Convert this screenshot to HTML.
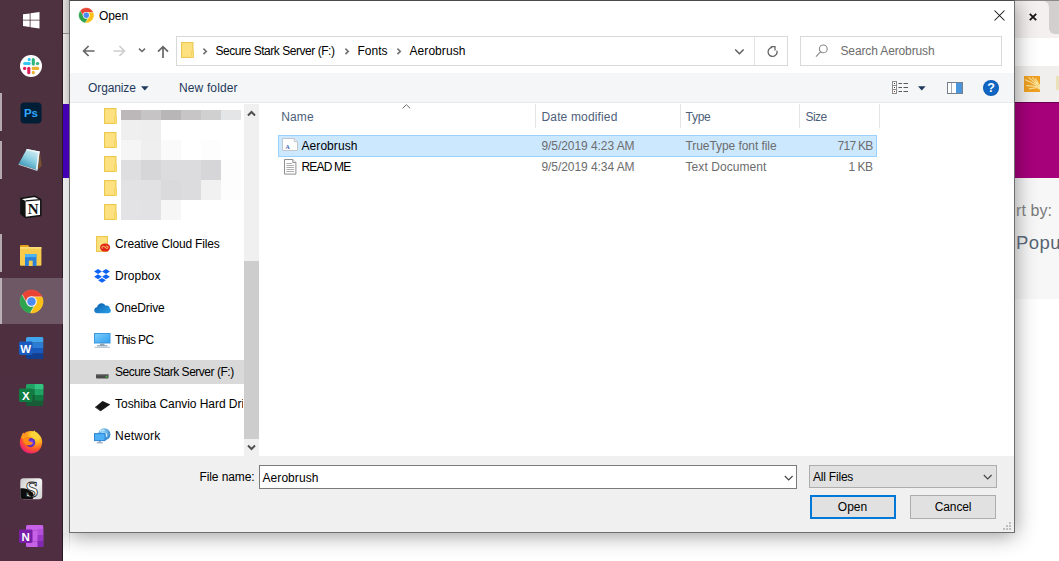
<!DOCTYPE html>
<html lang="en"><head><meta charset="utf-8"><title>Open</title>
<style>
*{box-sizing:border-box;margin:0;padding:0}
html,body{width:1059px;height:561px;overflow:hidden;background:#fff}
body{position:relative;font-family:"Liberation Sans",sans-serif;font-size:12px;color:#000}
.a{position:absolute}
.t{position:absolute;white-space:pre;line-height:16px;height:16px;font-family:"Liberation Sans",sans-serif}
svg{position:absolute;overflow:visible}
/* background page */
#bg{left:0;top:0;width:1059px;height:561px;background:#fff}
/* taskbar */
#tb{left:0;top:0;width:63px;border-right:1px solid #2b1a25;height:561px;background:linear-gradient(180deg,#4e323f 0%,#4e3040 50%,#4f2e42 100%)}
.run{left:0;width:2.3px;height:38px;background:#b3a9af}
/* dialog */
#dlg{left:69px;top:0;width:946px;height:532.5px;background:#fff;border:1px solid #6e6e6e;border-top-color:#4a4a4a;box-shadow:0 2px 20px 0 rgba(0,0,0,.42);clip-path:inset(0 -45px -45px 0)}
#toolbar{left:70px;top:73px;width:944px;height:30px;background:#f5f6f7;border-bottom:1px solid #e8e9ea}
#addr{left:176px;top:36px;width:612px;height:30px;border:1px solid #d9d9d9;background:#fff}
#search{left:800px;top:36px;width:202px;height:30px;border:1px solid #d9d9d9;background:#fff}
#navscroll{left:243.8px;top:104px;width:15.6px;height:352px;background:#f0f0f0}
#navthumb{left:243.8px;top:260.7px;width:15.6px;height:178px;background:#cdcdcd}
#navsel{left:70px;top:360px;width:173.8px;height:23.6px;background:#d9d9d9}
#bottom{left:70px;top:456px;width:944px;height:76px;background:#f0f0f0}
#fname{left:259px;top:465px;width:538px;height:24px;border:1px solid #7a7a7a;background:#fff}
#filter{left:809px;top:465px;width:188px;height:23px;border:1px solid #adadad;background:#e1e1e1}
#bopen{left:810px;top:495px;width:86px;height:24px;border:2px solid #0078d7;background:#e1e1e1}
#bcancel{left:910px;top:495px;width:86px;height:24px;border:1px solid #adadad;background:#e1e1e1}
#rowsel{left:278px;top:135px;width:599px;height:22px;background:#cce8ff;border:1px solid #99d1ff}
.hdiv{top:104px;width:1px;height:24px;background:#e5e5e5}

</style></head>
<body>
<div id="bg" class="a">
  <!-- left strip behind dialog -->
  <div class="a" style="left:62px;top:0;width:8px;height:561px;background:linear-gradient(90deg,#ececec,#dedede)"></div>
  <div class="a" style="left:62px;top:0;width:8px;height:34px;background:linear-gradient(90deg,#e6e4e2,#bab8b6)"></div>
  <div class="a" style="left:62px;top:33px;width:8px;height:1px;background:#8d8b89"></div>
  <div class="a" style="left:62px;top:34px;width:8px;height:70px;background:linear-gradient(90deg,#efedeb,#c4c2c0)"></div>
  <div class="a" style="left:62px;top:103.5px;width:8px;height:74px;background:#4300b3"></div>
  <div class="a" style="left:62px;top:533px;width:8px;height:28px;background:linear-gradient(180deg,#e2e2e2,#fff 75%)"></div>
  <!-- right side: chrome window -->
  <div class="a" style="left:1010px;top:0;width:49px;height:38px;background:#d2d0cf"></div>
  <div class="a" style="left:1010px;top:1px;width:38.5px;height:37px;background:#f3f0ef;border-radius:0 6px 0 0"></div>
  <div class="a" style="left:1042px;top:27px;width:17px;height:11px;background:#f3f0ef"></div>
  <div class="a" style="left:1048.5px;top:0;width:20px;height:33.5px;background:#d2d0cf;border-radius:0 0 0 6px"></div>
  <div class="a" style="left:1010px;top:0;width:49px;height:1px;background:#8a8785"></div>
  <svg style="left:1029.1px;top:12.9px" width="8" height="8" viewBox="0 0 8 8"><path d="M.8.8 7.2 7.2M7.2.8.8 7.2" stroke="#161616" stroke-width="1.8"/></svg>
  <div class="a" style="left:1010px;top:37.5px;width:49px;height:28.5px;background:#fff"></div>
  <div class="a" style="left:1010px;top:65.7px;width:49px;height:37px;background:#f1efee"></div>
  <svg style="left:1024px;top:75.8px" width="16" height="16" viewBox="0 0 16 16"><rect width="16" height="16" fill="#f0a122"/><g stroke="#fbe39a" stroke-width="1.1" stroke-linecap="round"><path d="M13 9.3 1.3 3.7M13.200000000000001 8.5 4.8 1.6M13.8 8 8.5 1.6M14.4 7.5 11.7 2.7M12.8 10.4 2.7 9.6M13 11.600000000000001 5.3 12.8"/></g><circle cx="16" cy="10.7" r="2.8" fill="#fbe39a"/><rect x="16" y="0" width="4" height="16" fill="#f1efee"/></svg>
  <div class="a" style="left:1056px;top:76.4px;width:8px;height:14px;background:#e9e1ba"></div>
  <div class="a" style="left:1010px;top:102.5px;width:49px;height:75px;background:#a7007b"></div>
  <div class="a" style="left:1010px;top:102.3px;width:49px;height:1.2px;background:#6a0050"></div>
  <div class="a" style="left:1010px;top:177.5px;width:49px;height:121px;background:#f7f7f7"></div>
  <div class="a" style="left:1010px;top:298.5px;width:49px;height:263px;background:#fff"></div>
  <!-- shadow to the right of dialog -->
  <div class="a" style="left:1014px;top:0;width:18px;height:0px;background:none"></div>
</div>
<div id="tb" class="a"></div>
<div class="a" style="left:0;top:277.6px;width:62.5px;height:46px;background:#6f5866"></div>
<div class="a run" style="top:93px"></div>
<div class="a run" style="top:140.6px"></div>
<div class="a run" style="top:234.3px"></div>
<div class="a run" style="top:277.6px;height:46px;background:#b9afb5"></div>
<svg style="left:23px;top:12px" width="16.5" height="16.5" viewBox="0 0 16.5 16.5"><path d="M0 2.3 6.7 1.4V7.8H0zM7.5 1.3 16.5 0V7.8H7.5zM0 8.6H6.7V15L0 14.1zM7.5 8.6H16.5V16.5L7.5 15.2z" fill="#fff"/></svg>
<svg style="left:19.8px;top:54.5px" width="22" height="22" viewBox="0 0 22 22"><circle cx="11" cy="11" r="11" fill="#fff"/><g stroke-linecap="round" stroke-width="3.1" fill="none"><path d="M4.7 8.5H9.2" stroke="#36c5f0"/><path d="M9.2 4.4v.4" stroke="#36c5f0"/><path d="M13.3 4.6V9" stroke="#2eb67d"/><path d="M17.4 8.5h.3" stroke="#2eb67d"/><path d="M13.2 13.4H17.7" stroke="#ecb22e"/><path d="M13.3 17.4v.4" stroke="#ecb22e"/><path d="M8.8 13.2V17.7" stroke="#e01e5a"/><path d="M4.5 13.4h.3" stroke="#e01e5a"/></g></svg>
<svg style="left:20px;top:102px" width="22" height="22" viewBox="0 0 22 22"><rect x="0.5" y="0.5" width="21" height="21" rx="4" fill="#001e36"/><text x="11" y="15.3" font-family="Liberation Sans, sans-serif" font-weight="700" font-size="11.5" fill="#31a8ff" text-anchor="middle">Ps</text></svg>
<svg style="left:18px;top:148px" width="25" height="23" viewBox="0 0 25 23"><defs><linearGradient id="np" x1=".75" y1="0" x2=".2" y2="1"><stop offset="0" stop-color="#d9f0f6"/><stop offset=".45" stop-color="#8fd0e2"/><stop offset="1" stop-color="#2389ad"/></linearGradient></defs><path d="M21.6 3.4 23.8 17.5 19.5 22z" fill="#7a5230"/><path d="M8.8.9 21.6 3.4 19.5 22 .6 15.9z" fill="url(#np)"/><path d="M21.6 3.4 19.5 22 17.9 21.5 20.2 3.1z" fill="#eef4f6"/><path d="M8.8.9 21.6 3.4 21.4 4.9 8.2 2.2z" fill="#eef6f8"/><path d="M.6 15.9 19.5 22 19.3 22.9 .5 16.8z" fill="#cfd8dc"/></svg>
<svg style="left:20px;top:195px" width="22" height="24" viewBox="0 0 22 24"><path d="M.9 3.4 15 1.3 20.8 4.7V20.5L5.6 22.5.9 18.6z" fill="#fff" stroke="#111" stroke-width="1.5" stroke-linejoin="round"/><path d="M.9 3.4 5.6 5.9V22.5L.9 18.6z" fill="#111"/><path d="M5.6 5.9 20.8 4.7" stroke="#111" stroke-width="1.3"/><text x="13.2" y="19" font-family="Liberation Serif, serif" font-weight="700" font-size="15" fill="#111" text-anchor="middle">N</text></svg>
<svg style="left:20px;top:244.4px" width="23" height="22" viewBox="0 0 23 22"><path d="M0 2.2C0 1.5.5 1 1.2 1H8l2 2.5H0z" fill="#e3a21a"/><rect x="0" y="3" width="21.4" height="18.8" rx="1" fill="#f8cb4c"/><rect x="0" y="3" width="21.4" height="1.8" fill="#fbdc7a"/><path d="M5 10H16.5V22H5z" fill="#2a7fd6"/><path d="M5 10H16.5V13.2H5z" fill="#4fb3f2"/><rect x="8.8" y="16.6" width="3.9" height="5.4" fill="#f8cb4c"/></svg>
<svg style="left:19.5px;top:289.5px" width="23" height="23" viewBox="0 0 24 24"><circle cx="12" cy="12" r="11.7" fill="#fff"/><g stroke-width=".7" stroke-linejoin="round"><path d="M12 0C8.21 0 4.831 1.757 2.632 4.501l3.953 6.848A5.454 5.454 0 0 1 12 6.545h10.691A12 12 0 0 0 12 0z" fill="#e94435" stroke="#e94435"/><path d="M1.931 5.47A11.943 11.943 0 0 0 0 12c0 6.012 4.42 10.991 10.189 11.864l3.953-6.847a5.45 5.45 0 0 1-6.865-2.29z" fill="#2ea44f" stroke="#2ea44f"/><path d="M15.273 7.636a5.446 5.446 0 0 1 1.45 7.09l.002.001h-.002l-5.344 9.257c.206.01.413.016.621.016 6.627 0 12-5.373 12-12 0-1.54-.29-3.011-.818-4.364z" fill="#fbc116" stroke="#fbc116"/></g><circle cx="12" cy="12" r="5.5" fill="#f1f1f1"/><circle cx="12" cy="12" r="4.4" fill="#4a8af4"/></svg>
<svg style="left:18.5px;top:337px" width="25" height="22" viewBox="0 0 25 22"><g><clipPath id="ocW"><rect x="7" y="0" width="17.5" height="22" rx="1.6"/></clipPath><g clip-path="url(#ocW)"><rect x="7" y="0.0" width="17.5" height="5.6" fill="#41a5ee"/><rect x="7" y="5.5" width="17.5" height="5.6" fill="#2b7cd3"/><rect x="7" y="11.0" width="17.5" height="5.6" fill="#185abd"/><rect x="7" y="16.5" width="17.5" height="5.6" fill="#103f91"/></g></g><rect x="0" y="4.5" width="13.5" height="13.5" rx="1.4" fill="#185abd"/><text x="6.75" y="15.6" font-family="Liberation Sans, sans-serif" font-weight="700" font-size="11.5" fill="#fff" text-anchor="middle">W</text></svg>
<svg style="left:18.5px;top:384px" width="25" height="22" viewBox="0 0 25 22"><g><clipPath id="ocX"><rect x="7" y="0" width="17.5" height="22" rx="1.6"/></clipPath><g clip-path="url(#ocX)"><rect x="7" y="0.0" width="17.5" height="5.6" fill="#21a366"/><rect x="7" y="5.5" width="17.5" height="5.6" fill="#107c41"/><rect x="7" y="11.0" width="17.5" height="5.6" fill="#185c37"/><rect x="7" y="16.5" width="17.5" height="5.6" fill="#185c37"/><rect x="15.75" y="0" width="9" height="5.6" fill="#33c481"/><rect x="15.75" y="5.5" width="9" height="5.6" fill="#21a366"/><rect x="15.75" y="11" width="9" height="5.6" fill="#107c41"/></g></g><rect x="0" y="4.5" width="13.5" height="13.5" rx="1.4" fill="#107c41"/><text x="6.75" y="15.6" font-family="Liberation Sans, sans-serif" font-weight="700" font-size="11.5" fill="#fff" text-anchor="middle">X</text></svg>
<svg style="left:19px;top:429.5px" width="24" height="24" viewBox="0 0 24 24"><defs><radialGradient id="ff1" cx=".72" cy=".18" r="1"><stop offset="0" stop-color="#fff04a"/><stop offset=".35" stop-color="#ffb01f"/><stop offset=".62" stop-color="#ff5a26"/><stop offset=".85" stop-color="#f0256b"/><stop offset="1" stop-color="#c21a8a"/></radialGradient><radialGradient id="ff2" cx=".55" cy=".5" r=".55"><stop offset="0" stop-color="#8a55ff"/><stop offset="1" stop-color="#4b1ea8"/></radialGradient></defs><circle cx="12" cy="12.3" r="11.2" fill="url(#ff1)"/><path d="M10.5 4C12.8 3 14.6 1.6 15.300000000000001.2 16 2.2 19.8 4 20.6 8.5L12 6z" fill="#ffd43a"/><path d="M2.2 8C2.2 5.5 3.4 3.4 4.6 2.4 5 4 6.5 5 8.5 5.3L5 10z" fill="#ff9a1f"/><circle cx="11.7" cy="12.6" r="4.6" fill="url(#ff2)"/><path d="M4 9.5C6.2 6.6 10.5 6.2 13 7.8 10.8 7.9 9.6 8.9 9.6 10.2c.2 2 3.6 1.3 4.2 2.8-1.2 2.3-4.6 2.9-7 1.5C4.8 13.4 4 11.300000000000001 4 9.5z" fill="#ff8a16"/></svg>
<svg style="left:20.3px;top:478.3px" width="22.5" height="21.5" viewBox="0 0 22.5 21.5"><defs><linearGradient id="sc" x1="0" y1="0" x2="1" y2="1"><stop offset="0" stop-color="#c9c9c9"/><stop offset=".5" stop-color="#f4f4f4"/><stop offset="1" stop-color="#d0d0d0"/></linearGradient><clipPath id="scc"><rect x=".3" y=".3" width="21.9" height="20.9" rx="3.2"/></clipPath></defs><rect x=".3" y=".3" width="21.9" height="20.9" rx="3.2" fill="url(#sc)"/><g clip-path="url(#scc)"><path d="M0 10.5C4 9.5 8.5 11 12.5 14.5 14 16 14 19 12.5 21.5H0z" fill="#0d0d0d"/></g><text x="11.8" y="19.3" font-family="Liberation Serif, serif" font-weight="700" font-size="23" fill="#fff" stroke="#1c1c1c" stroke-width=".8" text-anchor="middle">S</text><ellipse cx="11.3" cy="16.6" rx="1.6" ry="2.4" fill="#0d0d0d"/></svg>
<svg style="left:18.5px;top:525.3px" width="25" height="22" viewBox="0 0 25 22"><g><clipPath id="ocN"><rect x="7" y="0" width="17.5" height="22" rx="1.6"/></clipPath><g clip-path="url(#ocN)"><rect x="7" y="0.0" width="17.5" height="5.6" fill="#c762e8"/><rect x="7" y="5.5" width="17.5" height="5.6" fill="#c762e8"/><rect x="7" y="11.0" width="17.5" height="5.6" fill="#c762e8"/><rect x="7" y="16.5" width="17.5" height="5.6" fill="#c762e8"/><rect x="18.5" y="4" width="6" height="6" fill="#b250da"/><rect x="18.5" y="10" width="6" height="6" fill="#9a38c6"/><rect x="18.5" y="16" width="6" height="6" fill="#8227b2"/></g></g><rect x="0" y="4.5" width="13.5" height="13.5" rx="1.4" fill="#7a1fa8"/><text x="6.75" y="15.6" font-family="Liberation Sans, sans-serif" font-weight="700" font-size="11.5" fill="#fff" text-anchor="middle">N</text></svg>
<div id="dlg" class="a"></div>
<div id="toolbar" class="a"></div>
<div id="addr" class="a"></div>
<div class="a" style="left:754px;top:37px;width:1px;height:28px;background:#e3e3e3"></div>
<div id="search" class="a"></div>
<div id="navscroll" class="a"></div>
<div id="navthumb" class="a"></div>
<div id="navsel" class="a"></div>
<div id="rowsel" class="a"></div>
<div class="a hdiv" style="left:535px"></div>
<div class="a hdiv" style="left:680px"></div>
<div class="a hdiv" style="left:799px"></div>
<div class="a hdiv" style="left:879px"></div>
<div id="bottom" class="a"></div>
<div id="fname" class="a"></div>
<div id="filter" class="a"></div>
<div id="bopen" class="a"></div>
<div id="bcancel" class="a"></div>
<div class="a" style="left:121px;top:110px;width:20px;height:10px;background:#bcb8ba"></div>
<div class="a" style="left:141px;top:110px;width:20px;height:10px;background:#c6c4c5"></div>
<div class="a" style="left:161px;top:110px;width:20px;height:10px;background:#b9b6b8"></div>
<div class="a" style="left:181px;top:110px;width:20px;height:10px;background:#c8c5c7"></div>
<div class="a" style="left:201px;top:110px;width:20px;height:10px;background:#d1d0d1"></div>
<div class="a" style="left:221px;top:110px;width:20px;height:10px;background:#e4e5e6"></div>
<div class="a" style="left:121px;top:120px;width:20px;height:20px;background:#efefef"></div>
<div class="a" style="left:141px;top:120px;width:20px;height:20px;background:#eeeeee"></div>
<div class="a" style="left:121px;top:140px;width:20px;height:20px;background:#f5f5f5"></div>
<div class="a" style="left:141px;top:140px;width:20px;height:20px;background:#efefef"></div>
<div class="a" style="left:161px;top:140px;width:20px;height:20px;background:#fafafa"></div>
<div class="a" style="left:201px;top:140px;width:20px;height:20px;background:#fdfdfd"></div>
<div class="a" style="left:121px;top:160px;width:20px;height:20px;background:#dedde0"></div>
<div class="a" style="left:141px;top:160px;width:20px;height:20px;background:#d6d6d8"></div>
<div class="a" style="left:161px;top:160px;width:20px;height:20px;background:#dcdbde"></div>
<div class="a" style="left:181px;top:160px;width:20px;height:20px;background:#dcdbde"></div>
<div class="a" style="left:201px;top:160px;width:20px;height:20px;background:#d6d5d8"></div>
<div class="a" style="left:221px;top:160px;width:20px;height:20px;background:#fdfdfd"></div>
<div class="a" style="left:121px;top:180px;width:20px;height:20px;background:#e2e2e4"></div>
<div class="a" style="left:141px;top:180px;width:20px;height:20px;background:#e1e1e3"></div>
<div class="a" style="left:161px;top:180px;width:20px;height:20px;background:#dadadc"></div>
<div class="a" style="left:181px;top:180px;width:20px;height:20px;background:#dcdcde"></div>
<div class="a" style="left:201px;top:180px;width:20px;height:20px;background:#f1f1f1"></div>
<div class="a" style="left:221px;top:180px;width:20px;height:20px;background:#fdfdfd"></div>
<div class="a" style="left:121px;top:200px;width:20px;height:20px;background:#e3e3e5"></div>
<div class="a" style="left:141px;top:200px;width:20px;height:20px;background:#e2e2e4"></div>
<div class="a" style="left:161px;top:200px;width:20px;height:20px;background:#f6f6f6"></div>
<svg style="left:78.6px;top:7.6px" width="14.6" height="14.6" viewBox="0 0 24 24"><circle cx="12" cy="12" r="11.7" fill="#fff"/><g stroke-width=".7" stroke-linejoin="round"><path d="M12 0C8.21 0 4.831 1.757 2.632 4.501l3.953 6.848A5.454 5.454 0 0 1 12 6.545h10.691A12 12 0 0 0 12 0z" fill="#e94435" stroke="#e94435"/><path d="M1.931 5.47A11.943 11.943 0 0 0 0 12c0 6.012 4.42 10.991 10.189 11.864l3.953-6.847a5.45 5.45 0 0 1-6.865-2.29z" fill="#2ea44f" stroke="#2ea44f"/><path d="M15.273 7.636a5.446 5.446 0 0 1 1.45 7.09l.002.001h-.002l-5.344 9.257c.206.01.413.016.621.016 6.627 0 12-5.373 12-12 0-1.54-.29-3.011-.818-4.364z" fill="#fbc116" stroke="#fbc116"/></g><circle cx="12" cy="12" r="5.5" fill="#f1f1f1"/><circle cx="12" cy="12" r="4.4" fill="#4a8af4"/></svg>
<svg style="left:82px;top:44px" width="14" height="14" viewBox="0 0 14 14"><path d="M12.5 7H1.8M6.6 2 1.6 7l5 5" fill="none" stroke="#666" stroke-width="1.7"/></svg>
<svg style="left:112px;top:44px" width="14" height="14" viewBox="0 0 14 14"><path d="M1.5 7H12.2M7.4 2l5 5-5 5" fill="none" stroke="#cdcdcd" stroke-width="1.7"/></svg>
<svg style="left:138.3px;top:47.4px" width="8" height="6" viewBox="0 0 8 6"><path d="M1 1.7 4 4.5 7 1.7" fill="none" stroke="#6a6a6a" stroke-width="1.6"/></svg>
<svg style="left:156px;top:45px" width="14" height="14" viewBox="0 0 14 14"><path d="M7 13V1.8M2 6.7 7 1.7l5 5" fill="none" stroke="#666" stroke-width="1.7"/></svg>
<svg style="left:181px;top:42px" width="13" height="16" viewBox="0 0 13 16"><rect x="0.5" y="0.5" width="11.5" height="15" fill="#fcdc6e" stroke="#e9c752" stroke-width="1"/><rect x="1.5" y="1.5" width="9.5" height="13" fill="#fde180"/><path d="M10.3 16V9.6c0-.8 .5-1.2 1.2-1.2h.3c.7 0 1.2.4 1.2 1.2V16z" fill="#f3cf58"/><path d="M11.2 15.5V9.9c0-.4 .2-.6 .5-.6s.5.2 .5.6v5.6z" fill="#fbe288"/></svg>
<svg style="left:201.5px;top:47px" width="6" height="9" viewBox="0 0 6 9"><path d="M1.4 1.6 4.3 4.4 1.4 7.2" fill="none" stroke="#727272" stroke-width="1.6"/></svg>
<svg style="left:343.5px;top:47px" width="6" height="9" viewBox="0 0 6 9"><path d="M1.4 1.6 4.3 4.4 1.4 7.2" fill="none" stroke="#727272" stroke-width="1.6"/></svg>
<svg style="left:395.5px;top:47px" width="6" height="9" viewBox="0 0 6 9"><path d="M1.4 1.6 4.3 4.4 1.4 7.2" fill="none" stroke="#727272" stroke-width="1.6"/></svg>
<svg style="left:733.5px;top:48px" width="11" height="8" viewBox="0 0 11 8"><path d="M1.2 1.5 5.4 5.7 9.6 1.5" fill="none" stroke="#5a5a5a" stroke-width="1.4"/></svg>
<svg style="left:764.5px;top:45px" width="13" height="13" viewBox="0 0 13 13"><path d="M11.9 5.6A4.5 4.5 0 1 1 7.2 2.4" fill="none" stroke="#666" stroke-width="1.3"/><path d="M5.8 1.7H10V5.4" fill="none" stroke="#666" stroke-width="1.3"/></svg>
<svg style="left:814.5px;top:44px" width="14" height="14" viewBox="0 0 14 14"><circle cx="8.3" cy="4.9" r="3.9" fill="none" stroke="#8a8a8a" stroke-width="1.1"/><path d="M5.5 7.8 1 12.6" stroke="#8a8a8a" stroke-width="1.2"/></svg>
<svg style="left:993.5px;top:10px" width="11" height="11" viewBox="0 0 11 11"><path d="M0.5 0.5 10.5 10.5M10.5 0.5 0.5 10.5" stroke="#111" stroke-width="1.05"/></svg>
<svg style="left:141px;top:85.5px" width="8" height="5" viewBox="0 0 8 5"><path d="M0 .3H7.6L3.8 4.4z" fill="#1e395b"/></svg>
<svg style="left:892px;top:81px" width="17" height="13" viewBox="0 0 17 13"><rect x="0.5" y="0.5" width="4" height="4" fill="#fff" stroke="#8c8c8c" stroke-width="1"/><rect x="2" y="2.0" width="1" height="1" fill="#3a3a3a"/><path d="M6.5 2.5H10M11.5 2.5H16" stroke="#5a5a5a" stroke-width="1"/><rect x="0.5" y="4.5" width="4" height="4" fill="#fff" stroke="#8c8c8c" stroke-width="1"/><rect x="2" y="6.0" width="1" height="1" fill="#3a3a3a"/><path d="M6.5 6.5H10M11.5 6.5H16" stroke="#5a5a5a" stroke-width="1"/><rect x="0.5" y="8.5" width="4" height="4" fill="#fff" stroke="#8c8c8c" stroke-width="1"/><rect x="2" y="10.0" width="1" height="1" fill="#a03030"/><path d="M6.5 10.5H10M11.5 10.5H16" stroke="#5a5a5a" stroke-width="1"/></svg>
<svg style="left:917.5px;top:85.5px" width="8" height="5" viewBox="0 0 8 5"><path d="M0 .3H7.6L3.8 4.4z" fill="#1e395b"/></svg>
<svg style="left:947px;top:82px" width="16" height="12" viewBox="0 0 16 12"><rect x="0.5" y="0.5" width="15" height="11" fill="#fff" stroke="#75808e" stroke-width="1"/><rect x="9" y="1" width="6" height="10" fill="#4a96dc"/><path d="M4.5 1V11" stroke="#a3adb9" stroke-width="1"/></svg>
<svg style="left:983px;top:79.5px" width="16" height="16" viewBox="0 0 16 16"><circle cx="8" cy="8" r="8" fill="#0b5cb5"/><circle cx="8" cy="8" r="7" fill="#1166c4"/><text x="8" y="12.3" font-family="Liberation Sans, sans-serif" font-weight="700" font-size="12.5" fill="#fff" text-anchor="middle">?</text></svg>
<svg style="left:247px;top:109.8px" width="9" height="7" viewBox="0 0 9 7"><path d="M1 5.5 4.5 2 8 5.5" fill="none" stroke="#505050" stroke-width="2"/></svg>
<svg style="left:247px;top:444.3px" width="9" height="7" viewBox="0 0 9 7"><path d="M1 1.5 4.5 5 8 1.5" fill="none" stroke="#505050" stroke-width="2"/></svg>
<svg style="left:401.5px;top:104px" width="9" height="5" viewBox="0 0 9 5"><path d="M.6 4.4 4.4.7 8.2 4.4" fill="none" stroke="#6b6b6b" stroke-width="1"/></svg>
<svg style="left:104px;top:108px" width="13" height="16" viewBox="0 0 13 16"><rect x="0.5" y="0.5" width="11.5" height="15" fill="#fcdc6e" stroke="#e9c752" stroke-width="1"/><rect x="1.5" y="1.5" width="9.5" height="13" fill="#fde180"/><path d="M10.3 16V9.6c0-.8 .5-1.2 1.2-1.2h.3c.7 0 1.2.4 1.2 1.2V16z" fill="#f3cf58"/><path d="M11.2 15.5V9.9c0-.4 .2-.6 .5-.6s.5.2 .5.6v5.6z" fill="#fbe288"/></svg>
<svg style="left:104px;top:132px" width="13" height="16" viewBox="0 0 13 16"><rect x="0.5" y="0.5" width="11.5" height="15" fill="#fcdc6e" stroke="#e9c752" stroke-width="1"/><rect x="1.5" y="1.5" width="9.5" height="13" fill="#fde180"/><path d="M10.3 16V9.6c0-.8 .5-1.2 1.2-1.2h.3c.7 0 1.2.4 1.2 1.2V16z" fill="#f3cf58"/><path d="M11.2 15.5V9.9c0-.4 .2-.6 .5-.6s.5.2 .5.6v5.6z" fill="#fbe288"/></svg>
<svg style="left:104px;top:156px" width="13" height="16" viewBox="0 0 13 16"><rect x="0.5" y="0.5" width="11.5" height="15" fill="#fcdc6e" stroke="#e9c752" stroke-width="1"/><rect x="1.5" y="1.5" width="9.5" height="13" fill="#fde180"/><path d="M10.3 16V9.6c0-.8 .5-1.2 1.2-1.2h.3c.7 0 1.2.4 1.2 1.2V16z" fill="#f3cf58"/><path d="M11.2 15.5V9.9c0-.4 .2-.6 .5-.6s.5.2 .5.6v5.6z" fill="#fbe288"/></svg>
<svg style="left:104px;top:180px" width="13" height="16" viewBox="0 0 13 16"><rect x="0.5" y="0.5" width="11.5" height="15" fill="#fcdc6e" stroke="#e9c752" stroke-width="1"/><rect x="1.5" y="1.5" width="9.5" height="13" fill="#fde180"/><path d="M10.3 16V9.6c0-.8 .5-1.2 1.2-1.2h.3c.7 0 1.2.4 1.2 1.2V16z" fill="#f3cf58"/><path d="M11.2 15.5V9.9c0-.4 .2-.6 .5-.6s.5.2 .5.6v5.6z" fill="#fbe288"/></svg>
<svg style="left:104px;top:204px" width="13" height="16" viewBox="0 0 13 16"><rect x="0.5" y="0.5" width="11.5" height="15" fill="#fcdc6e" stroke="#e9c752" stroke-width="1"/><rect x="1.5" y="1.5" width="9.5" height="13" fill="#fde180"/><path d="M10.3 16V9.6c0-.8 .5-1.2 1.2-1.2h.3c.7 0 1.2.4 1.2 1.2V16z" fill="#f3cf58"/><path d="M11.2 15.5V9.9c0-.4 .2-.6 .5-.6s.5.2 .5.6v5.6z" fill="#fbe288"/></svg>
<svg style="left:96px;top:236px" width="15" height="16" viewBox="0 0 15 16"><rect x="0.5" y="0.5" width="11" height="15" fill="#fcdc6e" stroke="#e9c752"/><rect x="1.5" y="1.5" width="9" height="13" fill="#fde180"/><ellipse cx="9.1" cy="11.5" rx="5" ry="4.1" fill="#e1251b"/><path d="M6.4 12.5c-.9-.9-.2-2.5 1.2-2.2.9.2 1.7 1.5 2.7 2 1.2.6 2.2-.5 1.6-1.5-.5-.8-1.5-.9-2.2-.3" fill="none" stroke="#fbd96b" stroke-width="1"/></svg>
<svg style="left:94px;top:269px" width="16" height="14" viewBox="0 0 16 14"><g fill="#0d63f2"><path d="M4 0.10000000000000009L7.9 2.6L4 5.1L0.10000000000000009 2.6z"/><path d="M12 0.10000000000000009L15.9 2.6L12 5.1L8.1 2.6z"/><path d="M4 5.2L7.9 7.7L4 10.2L0.10000000000000009 7.7z"/><path d="M12 5.2L15.9 7.7L12 10.2L8.1 7.7z"/><path d="M8 8.9L11.9 11.3L8 13.700000000000001L4.1 11.3z"/></g></svg>
<svg style="left:93.5px;top:302.5px" width="17" height="11" viewBox="0 0 17 11"><defs><linearGradient id="od" x1="0" y1="0" x2="1" y2="1"><stop offset="0" stop-color="#0a5cab"/><stop offset="1" stop-color="#2ba3ea"/></linearGradient></defs><path d="M3.6 10.3C1.6 10.3.2 9 .2 7.300000000000001c0-1.6 1.2-2.800000000000001 2.700000000000001-3C3.5 2 5.300000000000001.3 7.600000000000001.3c1.8 0 3.3 1 4 2.400000000000001.3-.1.7-.2 1.100000000000001-.2 1.700000000000001 0 3 1.300000000000001 3.1 2.900000000000001.7.5 1.1 1.300000000000001 1.1 2.200000000000001 0 1.5-1.2 2.700000000000001-2.700000000000001 2.700000000000001z" fill="url(#od)"/></svg>
<svg style="left:94px;top:333px" width="17" height="15" viewBox="0 0 17 15"><defs><linearGradient id="pc" x1="0" y1="0" x2="1" y2="1"><stop offset="0" stop-color="#7fd0fb"/><stop offset="1" stop-color="#2f9df0"/></linearGradient></defs><rect x="0.5" y="0.5" width="15.5" height="9.5" fill="url(#pc)" stroke="#3b97e0"/><rect x="6" y="10.5" width="4.5" height="2" fill="#8fa3b5"/><rect x="3" y="12.3" width="10.5" height="1" fill="#7d93a7"/><rect x="0.5" y="13.8" width="15.5" height=".9" fill="#9fb3c5"/></svg>
<svg style="left:96px;top:373.5px" width="13" height="5" viewBox="0 0 13 5"><rect x="0" y="0" width="12.5" height="4.5" rx=".8" fill="#4a4a4a"/><rect x="0" y="0" width="12.5" height="1.2" fill="#7b7b7b"/><rect x="9.5" y="2.3" width="2" height="1.2" fill="#3ed13e"/></svg>
<svg style="left:95px;top:400.5px" width="15.5" height="11" viewBox="0 0 15.5 11"><path d="M7.5 0 15.3 3.6 5.6 10.3 0 6.300000000000001z" fill="#161616"/><path d="M0 6.300000000000001 5.6 10.3 5.6 9.200000000000001.3 5.5z" fill="#4a4a4a"/></svg>
<svg style="left:93.5px;top:428px" width="17" height="16" viewBox="0 0 17 16"><defs><radialGradient id="gl" cx=".4" cy=".35" r=".7"><stop offset="0" stop-color="#9ddcf9"/><stop offset="1" stop-color="#2b7fc9"/></radialGradient></defs><circle cx="10.3" cy="6.3" r="6.1" fill="url(#gl)"/><path d="M6 3.5c1.5-1.5 3-1.800000000000001 4.5-1.2M11.5 5c1 .8 1.6 2.3 1.200000000000001 4" stroke="#d6f2ff" stroke-width="1.1" fill="none"/><rect x="0.5" y="5.6" width="10.5" height="7" fill="#4eb0f5" stroke="#2f86d6"/><rect x="4.6" y="13" width="2.2" height="1.4" fill="#8fa3b5"/><rect x="2.6" y="14.4" width="6.3" height=".9" fill="#7d93a7"/></svg>
<svg style="left:282px;top:138px" width="16" height="13" viewBox="0 0 16 13"><path d="M.5 .5H12.3L15.5 3.7V12.5H.5z" fill="#fdfdfd" stroke="#c3c6cb"/><path d="M12.3 .5V3.7H15.5" fill="#eef0f3" stroke="#c3c6cb"/><text x="5.6" y="11.2" font-family="Liberation Serif, serif" font-weight="700" font-size="5.8" fill="#3b5fb4" text-anchor="middle">A</text></svg>
<svg style="left:284px;top:158.5px" width="13" height="16" viewBox="0 0 13 16"><path d="M.5 .5H8.8L11.9 3.6V15.1H.5z" fill="#fff" stroke="#8e8e8e"/><path d="M8.8 .5V3.6H11.9" fill="#f3f3f3" stroke="#8e8e8e"/><path d="M2.3 4.5H8" stroke="#9a9a9a" stroke-width=".8"/><path d="M2.3 6.5H10.1" stroke="#9a9a9a" stroke-width=".8"/><path d="M2.3 8.5H10.1" stroke="#9a9a9a" stroke-width=".8"/><path d="M2.3 10.5H10.1" stroke="#9a9a9a" stroke-width=".8"/><path d="M2.3 12.5H10.1" stroke="#9a9a9a" stroke-width=".8"/></svg>
<svg style="left:783.5px;top:474.5px" width="10" height="7" viewBox="0 0 10 7"><path d="M.8 1 4.7 4.9 8.6 1" fill="none" stroke="#444" stroke-width="1.1"/></svg>
<svg style="left:983px;top:474px" width="10" height="7" viewBox="0 0 10 7"><path d="M.8 1 4.7 4.9 8.6 1" fill="none" stroke="#444" stroke-width="1.1"/></svg>
<svg style="left:1002.8px;top:522.2px" width="8" height="8" viewBox="0 0 8 8"><rect x="6" y="0" width="2" height="2" fill="#bfbfbf"/><rect x="3" y="3" width="2" height="2" fill="#bfbfbf"/><rect x="6" y="3" width="2" height="2" fill="#bfbfbf"/><rect x="0" y="6" width="2" height="2" fill="#bfbfbf"/><rect x="3" y="6" width="2" height="2" fill="#bfbfbf"/><rect x="6" y="6" width="2" height="2" fill="#bfbfbf"/></svg>

<div id="texts">
<span class="t" style="left:98.9px;top:7.8px;font-size:12px;color:#000;letter-spacing:-0.015px;">Open</span>
<span class="t" style="left:215.5px;top:42.5px;font-size:12px;color:#000;letter-spacing:-0.460px;">Secure Stark Server (F:)</span>
<span class="t" style="left:357.5px;top:42.5px;font-size:12px;color:#000;letter-spacing:-0.003px;">Fonts</span>
<span class="t" style="left:409.5px;top:42.5px;font-size:12px;color:#000;letter-spacing:0.069px;">Aerobrush</span>
<span class="t" style="left:840.5px;top:42.5px;font-size:12px;color:#6d6d6d;letter-spacing:-0.129px;">Search Aerobrush</span>
<span class="t" style="left:88.1px;top:79.5px;font-size:12px;color:#1e395b;letter-spacing:-0.138px;">Organize</span>
<span class="t" style="left:179.0px;top:79.5px;font-size:12px;color:#1e395b;letter-spacing:0.134px;">New folder</span>
<span class="t" style="left:115.1px;top:235.5px;font-size:12px;color:#000;letter-spacing:-0.182px;">Creative Cloud Files</span>
<span class="t" style="left:115.1px;top:267.5px;font-size:12px;color:#000;letter-spacing:0.006px;">Dropbox</span>
<span class="t" style="left:115.1px;top:299.5px;font-size:12px;color:#000;letter-spacing:-0.161px;">OneDrive</span>
<span class="t" style="left:115.1px;top:331.5px;font-size:12px;color:#000;letter-spacing:-0.612px;">This PC</span>
<span class="t" style="left:115.1px;top:363.5px;font-size:12px;color:#000;letter-spacing:-0.476px;">Secure Stark Server (F:)</span>
<span class="t" style="left:115.1px;top:395.5px;font-size:12px;color:#000;letter-spacing:-0.049px;width:127.9px;overflow:hidden;">Toshiba Canvio Hard Drive</span>
<span class="t" style="left:115.1px;top:427.5px;font-size:12px;color:#000;letter-spacing:0.198px;">Network</span>
<span class="t" style="left:281.3px;top:108.5px;font-size:12px;color:#4c607a;letter-spacing:0.096px;">Name</span>
<span class="t" style="left:541.5px;top:108.5px;font-size:12px;color:#4c607a;letter-spacing:0.150px;">Date modified</span>
<span class="t" style="left:685.5px;top:108.5px;font-size:12px;color:#4c607a;letter-spacing:-0.254px;">Type</span>
<span class="t" style="left:805.5px;top:108.5px;font-size:12px;color:#4c607a;letter-spacing:-0.586px;">Size</span>
<span class="t" style="left:301.5px;top:137.5px;font-size:12px;color:#000;letter-spacing:0.069px;">Aerobrush</span>
<span class="t" style="left:541.5px;top:137.5px;font-size:12px;color:#6d6d6d;letter-spacing:-0.067px;">9/5/2019 4:23 AM</span>
<span class="t" style="left:685.5px;top:137.5px;font-size:12px;color:#6d6d6d;letter-spacing:-0.071px;">TrueType font file</span>
<span class="t" style="left:837.5px;top:137.5px;font-size:12px;color:#6d6d6d;letter-spacing:-0.729px;">717 KB</span>
<span class="t" style="left:301.5px;top:158.5px;font-size:12px;color:#000;letter-spacing:-0.812px;">READ ME</span>
<span class="t" style="left:541.5px;top:158.5px;font-size:12px;color:#6d6d6d;letter-spacing:-0.067px;">9/5/2019 4:34 AM</span>
<span class="t" style="left:685.5px;top:158.5px;font-size:12px;color:#6d6d6d;letter-spacing:0.073px;">Text Document</span>
<span class="t" style="left:848.5px;top:158.5px;font-size:12px;color:#6d6d6d;letter-spacing:-0.504px;">1 KB</span>
<span class="t" style="left:199.5px;top:469.3px;font-size:12px;color:#000;letter-spacing:-0.103px;">File name:</span>
<span class="t" style="left:262.5px;top:469.9px;font-size:12px;color:#000;letter-spacing:0.069px;">Aerobrush</span>
<span class="t" style="left:812.9px;top:468.5px;font-size:12px;color:#000;letter-spacing:-0.191px;">All Files</span>
<span class="t" style="left:837.8px;top:498.5px;font-size:12px;color:#000;letter-spacing:0.010px;">Open</span>
<span class="t" style="left:934.8px;top:498.5px;font-size:12px;color:#000;letter-spacing:-0.143px;">Cancel</span>
<span class="t" style="left:1016.0px;top:203.2px;font-size:16px;color:#787878;letter-spacing:0.073px;">rt by:</span>
<span class="t" style="left:1016.0px;top:234.7px;font-size:18.5px;color:#556372;letter-spacing:0.462px;">Popular</span>
</div>
</body></html>
